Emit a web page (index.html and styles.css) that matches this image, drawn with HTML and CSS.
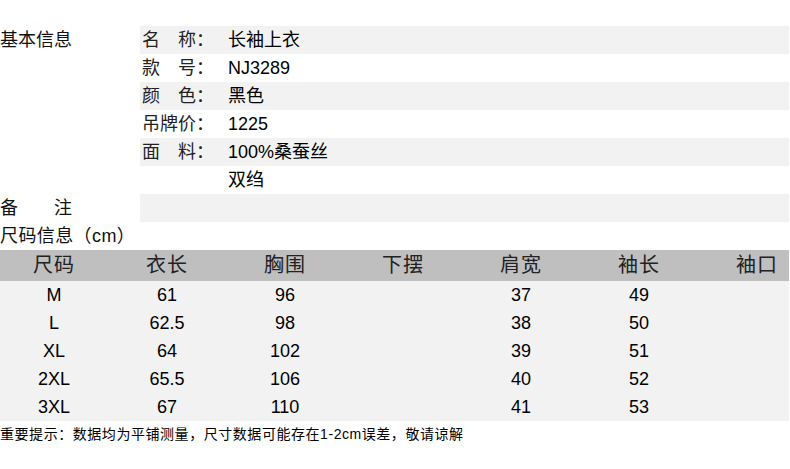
FILE: index.html
```html
<!DOCTYPE html>
<html lang="zh">
<head>
<meta charset="utf-8">
<link rel="stylesheet" href="styles.css">
</head>
<body>
<div class="page">
  <div class="info">
    <div class="row"><div class="side">基本信息</div><div class="cells gray"><span class="label">名　称：</span><span class="value">长袖上衣</span></div></div>
    <div class="row"><div class="side"></div><div class="cells"><span class="label">款　号：</span><span class="value">NJ3289</span></div></div>
    <div class="row"><div class="side"></div><div class="cells gray"><span class="label">颜　色：</span><span class="value">黑色</span></div></div>
    <div class="row"><div class="side"></div><div class="cells"><span class="label">吊牌价：</span><span class="value">1225</span></div></div>
    <div class="row"><div class="side"></div><div class="cells gray"><span class="label">面　料：</span><span class="value">100%桑蚕丝</span></div></div>
    <div class="row"><div class="side"></div><div class="cells"><span class="label"></span><span class="value">双绉</span></div></div>
    <div class="row"><div class="side">备　　注</div><div class="cells gray"></div></div>
    <div class="row"><div class="side wide">尺码信息（cm）</div></div>
  </div>
  <div class="size-wrap">
    <div class="size head">
      <span>尺码</span><span>衣长</span><span>胸围</span><span>下摆</span><span>肩宽</span><span>袖长</span><span>袖口</span>
    </div>
    <div class="size body">
      <span>M</span><span>61</span><span>96</span><span></span><span>37</span><span>49</span><span></span>
      <span>L</span><span>62.5</span><span>98</span><span></span><span>38</span><span>50</span><span></span>
      <span>XL</span><span>64</span><span>102</span><span></span><span>39</span><span>51</span><span></span>
      <span>2XL</span><span>65.5</span><span>106</span><span></span><span>40</span><span>52</span><span></span>
      <span>3XL</span><span>67</span><span>110</span><span></span><span>41</span><span>53</span><span></span>
    </div>
  </div>
  <p class="note">重要提示：数据均为平铺测量，尺寸数据可能存在1-2cm误差，敬请谅解</p>
</div>
</body>
</html>
```

FILE: styles.css
```css
html, body {
  margin: 0;
  padding: 0;
  background: #ffffff;
}
body {
  font-family: "Liberation Sans", "Noto Sans CJK SC", sans-serif;
  font-size: 18px;
  color: #111;
}
.page {
  width: 790px;
  padding-top: 26px;
}
.info {
  display: flex;
  flex-direction: column;
}
.row {
  display: flex;
  height: 28px;
  line-height: 28px;
}
.side {
  width: 140px;
  flex: none;
  white-space: nowrap;
}
.side.wide {
  width: auto;
  letter-spacing: 0.4px;
}
.cells {
  display: flex;
  width: 649px;
  flex: none;
}
.cells.gray {
  background: #f2f2f2;
}
.label {
  width: 86px;
  padding-left: 2px;
  flex: none;
  color: #222;
}
.value {
  color: #000;
}
.size-wrap {
  width: 789px;
  overflow: hidden;
}
.size {
  display: grid;
  grid-template-columns: 108px repeat(6, 118px);
  width: 816px;
  text-align: center;
}
.size.head {
  background: #bfbfbf;
  height: 31px;
  line-height: 31px;
  font-size: 20px;
  letter-spacing: 1px;
  color: #222;
}
.size.body {
  background: #f2f2f2;
  grid-auto-rows: 28px;
  line-height: 28px;
  color: #000;
}
.note {
  margin: 0;
  font-size: 14px;
  line-height: 26px;
  letter-spacing: 0.55px;
  color: #000;
  white-space: nowrap;
}
```
